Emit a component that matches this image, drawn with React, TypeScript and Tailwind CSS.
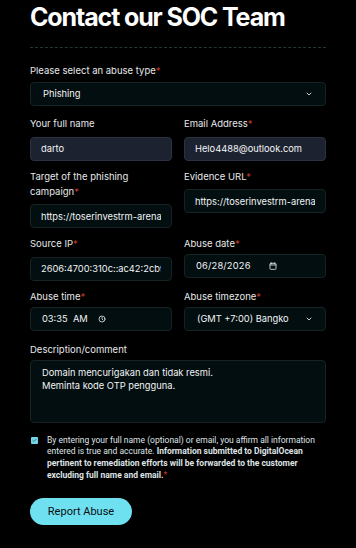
import React from "react";

const font = { fontFamily: "Inter, 'Noto Sans', sans-serif" };

function Label({ children, req }: { children: React.ReactNode; req?: boolean }) {
  return (
    <div className="text-[9.5px] leading-[15px] text-[#e6e8ea]">
      {children}
      {req && <span className="text-[#c0392b]">*</span>}
    </div>
  );
}

function Field({ value, variant = "dark" }: { value: string; variant?: "dark" | "gray" }) {
  const cls =
    variant === "gray"
      ? "bg-[#1d2230] border-[#2b3140]"
      : "bg-[#030e10] border-[#152325]";
  return (
    <input
      readOnly
      value={value}
      className={`w-full h-[24px] rounded-[4px] border ${cls} px-[10px] text-[9.3px] text-[#f2f4f5] outline-none`}
      style={font}
    />
  );
}

function Chevron() {
  return (
    <svg width="8" height="8" viewBox="0 0 24 24" fill="none" stroke="#c9d1d3" strokeWidth="3" strokeLinecap="round" strokeLinejoin="round">
      <path d="M6 9l6 6 6-6" />
    </svg>
  );
}

export default function App() {
  return (
    <div className="min-h-[548px] w-[356px] bg-black" style={font}>
      <div className="px-[30px]">
        <h1 className="text-[25px] leading-[34px] font-bold tracking-[-0.045em] text-white">
          Contact our SOC Team
        </h1>
        <div className="mt-[13px] border-t border-dashed border-[#1f3a36]" />

        <div className="mt-[15px]">
          <Label req>Please select an abuse type</Label>
          <div className="mt-[4px] h-[24px] rounded-[4px] border border-[#152325] bg-[#030e10] flex items-center justify-between pl-[12px] pr-[12px]">
            <span className="text-[9.3px] text-[#f2f4f5]">Phishing</span>
            <Chevron />
          </div>
        </div>

        <div className="mt-[10px] grid grid-cols-2 gap-x-[12px]">
          <div>
            <Label>Your full name</Label>
            <div className="mt-[3px]"><Field value="darto" variant="gray" /></div>
          </div>
          <div>
            <Label req>Email Address</Label>
            <div className="mt-[3px]"><Field value="Helo4488@outlook.com" variant="gray" /></div>
          </div>
        </div>

        <div className="mt-[8px] grid grid-cols-2 gap-x-[12px]">
          <div>
            <Label req>
              Target of the phishing
              <br />
              campaign
            </Label>
            <div className="mt-[3px]"><Field value="https://toserinvestrm-arena.com" /></div>
          </div>
          <div>
            <Label req>Evidence URL</Label>
            <div className="mt-[3px]"><Field value="https://toserinvestrm-arena.com" /></div>
          </div>
        </div>

        <div className="mt-[8px] grid grid-cols-2 gap-x-[12px]">
          <div>
            <Label req>Source IP</Label>
            <div className="mt-[3px]"><Field value="2606:4700:310c::ac42:2cb9" /></div>
          </div>
          <div>
            <Label req>Abuse date</Label>
            <div className="mt-[3px] h-[24px] rounded-[4px] border border-[#152325] bg-[#030e10] flex items-center pl-[11px] gap-[18px]">
              <span className="text-[9.3px] text-[#f2f4f5] tracking-[0.02em]">06/28/2026</span>
              <svg width="8" height="8" viewBox="0 0 24 24" fill="none" stroke="#d6dadc" strokeWidth="2.6" strokeLinecap="round" strokeLinejoin="round">
                <rect x="3" y="4" width="18" height="18" rx="2" />
                <path d="M3 9h18M8 2v4M16 2v4" />
              </svg>
            </div>
          </div>
        </div>

        <div className="mt-[8px] grid grid-cols-2 gap-x-[12px]">
          <div>
            <Label req>Abuse time</Label>
            <div className="mt-[3px] h-[24px] rounded-[4px] border border-[#152325] bg-[#030e10] flex items-center pl-[11px] gap-[10px]">
              <span className="text-[9.3px] text-[#f2f4f5]">03:35&nbsp; AM</span>
              <svg width="8" height="8" viewBox="0 0 24 24" fill="none" stroke="#d6dadc" strokeWidth="2.6" strokeLinecap="round" strokeLinejoin="round">
                <circle cx="12" cy="12" r="9" />
                <path d="M12 7v5l3 3" />
              </svg>
            </div>
          </div>
          <div>
            <Label req>Abuse timezone</Label>
            <div className="mt-[3px] h-[24px] rounded-[4px] border border-[#152325] bg-[#030e10] flex items-center justify-between pl-[12px] pr-[12px]">
              <span className="text-[9.3px] text-[#f2f4f5]">(GMT +7:00) Bangko</span>
              <Chevron />
            </div>
          </div>
        </div>

        <div className="mt-[11px]">
          <Label>Description/comment</Label>
          <div className="mt-[3px] h-[63px] rounded-[4px] border border-[#152325] bg-[#030e10] px-[11px] pt-[5px] text-[9.3px] leading-[13px] text-[#f2f4f5]">
            Domain mencurigakan dan tidak resmi.
            <br />
            Meminta kode OTP pengguna.
          </div>
        </div>

        <div className="mt-[12px] flex items-start gap-[9px]">
          <div className="mt-[2.5px] ml-[1px] w-[7px] h-[7px] shrink-0 rounded-[1px] bg-[#6fd7e6] flex items-center justify-center">
            <svg width="5" height="5" viewBox="0 0 24 24" fill="none" stroke="#2a6a74" strokeWidth="4" strokeLinecap="round" strokeLinejoin="round">
              <path d="M4 12l5 5L20 6" />
            </svg>
          </div>
          <p className="text-[8.5px] leading-[11.7px] text-[#dfe3e6]" style={{ fontFamily: "Roboto, 'Noto Sans', sans-serif" }}>
            By entering your full name (optional) or email, you affirm all information entered is true and accurate.{" "}
            <span className="font-bold">
              Information submitted to DigitalOcean pertinent to remediation efforts will be forwarded to the customer excluding full name and email.
            </span>
            <span className="text-[#c0392b]">*</span>
          </p>
        </div>

        <button
          className="mt-[17px] h-[27px] w-[102px] rounded-full bg-[#6fe0ef] text-[11px] text-[#0a0f12]"
          style={{ fontFamily: "Roboto, 'Noto Sans', sans-serif" }}
        >
          Report Abuse
        </button>
      </div>
    </div>
  );
}
